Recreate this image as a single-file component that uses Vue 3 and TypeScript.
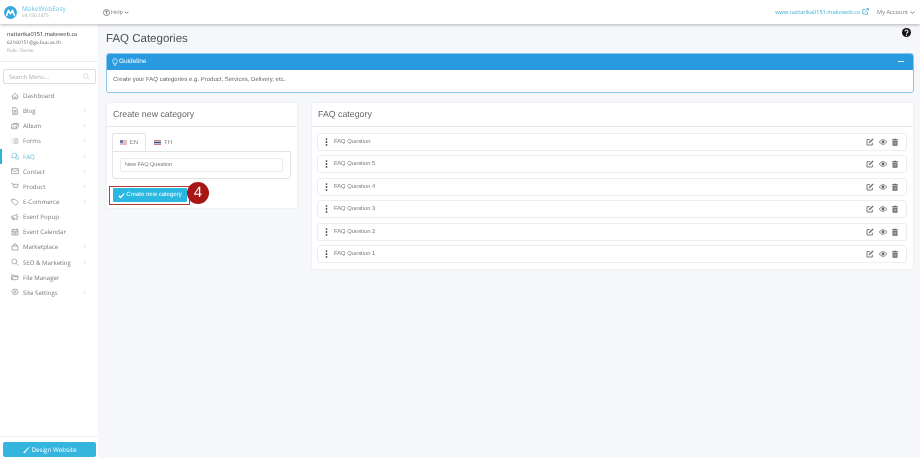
<script setup lang="ts">
const menu = [
  { label: 'Dashboard', icon: 'home', arrow: false },
  { label: 'Blog', icon: 'doc', arrow: true },
  { label: 'Album', icon: 'album', arrow: true },
  { label: 'Forms', icon: 'list', arrow: true },
  { label: 'FAQ', icon: 'faq', arrow: true, active: true },
  { label: 'Contact', icon: 'mail', arrow: true },
  { label: 'Product', icon: 'cart', arrow: true },
  { label: 'E-Commerce', icon: 'tag', arrow: true },
  { label: 'Event Popup', icon: 'horn', arrow: false },
  { label: 'Event Calendar', icon: 'cal', arrow: false },
  { label: 'Marketplace', icon: 'bag', arrow: true },
  { label: 'SEO & Marketing', icon: 'search', arrow: true },
  { label: 'File Manager', icon: 'folder', arrow: false },
  { label: 'Site Settings', icon: 'gear', arrow: true },
]
const icons: Record<string, string> = {
  home: 'M1 6.5 6 2l5 4.5M2.5 5.5V10.5h2.5V7.5h2v3h2.5V5.5',
  doc: 'M2.5 1h5l2 2v8h-7zM4 5h4M4 7h4M4 9h4',
  album: 'M1 3.5h8v6.5H1zM3 2h8v6M2 9l2.5-2.5L6 8l1-1 2 2',
  list: 'M1 3h1M1 6h1M1 9h1M4 3h7M4 6h7M4 9h7',
  faq: 'M1.5 5a3.5 3.5 0 1 1 2 3.2L1.5 9zM6.5 5.5a2.8 2.8 0 0 1 4 3.5l.5 2-2-.7a2.8 2.8 0 0 1-3-1.8',
  mail: 'M1 2.5h10v7.5H1zM1 3.5l5 3.5 5-3.5',
  cart: 'M.5 2h2l1.5 6h6l1-4.5H3M4.5 10.5h.5M9 10.5h.5',
  tag: 'M1 2h5l5 5-4 4-6-5.5zM3.3 4h.4',
  horn: 'M1 4.5h3L9 2v8L4 7.500H1zM2.500 7.500l.7 3h1.300l-.7-3M10.500 5v2',
  cal: 'M1.500 2.500h9v8h-9zM1.500 5h9M3.500 1v2M8.500 1v2M3.500 7h5M3.500 8.800h5',
  bag: 'M1.500 4.500h9v6h-9zM4 4.500V3a2 2 0 0 1 4 0v1.500',
  search: 'M5 1.500a3.700 3.700 0 1 0 0 7.400 3.700 3.700 0 0 0 0-7.400zM8 8l3.200 3.200',
  folder: 'M1 3h3.500l1 1.200H10v1.300M1 3v7h8.500l1.500-4.500H3L1 10',
  gear: 'M6 1.200 7.400 2.400 9.300 2.100 9.700 4 11 5.500 9.900 7l-.3 1.900-1.900.2L6 10.500 4.600 9.100l-1.900-.2L2.300 7 1 5.500 2.300 4l.4-1.900 1.900.3zM6 4.200a1.600 1.600 0 1 0 0 3.200 1.600 1.600 0 0 0 0-3.200z',
}
const questions = ['FAQ Question', 'FAQ Question 5', 'FAQ Question 4', 'FAQ Question 3', 'FAQ Question 2', 'FAQ Question 1']
</script>

<template>
  <div class="page">
    <header class="topbar">
      <div class="brand">
        <svg class="logo" viewBox="0 0 20 20" width="13" height="13">
          <circle cx="10" cy="10" r="10" fill="#35a9dc" />
          <path d="M4 14.500 6.800 6.500 10 12l3.200-5.500 2.800 8" fill="none" stroke="#fff" stroke-width="2.400" stroke-linecap="round" stroke-linejoin="round" />
        </svg>
        <div class="brand-text">
          <div class="brand-name">MakeWebEasy</div>
          <div class="brand-ver">v4.150.1875</div>
        </div>
      </div>
      <div class="help">
        <svg viewBox="0 0 12 12" width="7" height="7"><circle cx="6" cy="6" r="5.200" fill="none" stroke="#555" stroke-width="1.100" /><path d="M3.500 4h5M6 4v5" stroke="#555" stroke-width="1.100" fill="none" /></svg>
        <span>Help</span>
        <svg viewBox="0 0 8 8" width="5" height="5"><path d="M1 2.500 4 5.500 7 2.500" fill="none" stroke="#555" stroke-width="1.200" /></svg>
      </div>
      <div class="spacer"></div>
      <span class="site">www.nattarika0151.makeweb.co</span>
      <svg class="ext" viewBox="0 0 12 12" width="7" height="7"><path d="M9.500 7v3.500h-8V2.500H6M5 7.500 10.800 1.200M7.500 1h3.500v3.500" fill="none" stroke="#2aa5c9" stroke-width="1.200" /></svg>
      <span class="account">My Account</span>
      <svg class="acc-arrow" viewBox="0 0 8 8" width="5" height="5"><path d="M1 2.500 4 5.500 7 2.500" fill="none" stroke="#555" stroke-width="1.200" /></svg>
    </header>

    <div class="body">
      <aside class="sidebar">
        <div class="user">
          <div class="user-name">nattarika0151.makeweb.co</div>
          <div class="user-mail">62160151@go.buu.ac.th</div>
          <div class="user-role">Role: Owner</div>
        </div>
        <div class="search">
          <span>Search Menu...</span>
          <svg viewBox="0 0 12 12" width="7" height="7"><circle cx="5" cy="5" r="3.800" fill="none" stroke="#ccc" stroke-width="1.100" /><path d="M8 8l3 3" stroke="#ccc" stroke-width="1.100" /></svg>
        </div>
        <nav class="menu">
          <div v-for="m in menu" :key="m.label" class="item" :class="{ active: m.active }">
            <svg class="mi" viewBox="0 0 12 12" width="8" height="8"><path :d="icons[m.icon]" fill="none" stroke="currentColor" stroke-width="1" /></svg>
            <span class="ml">{{ m.label }}</span>
            <svg v-if="m.arrow" class="ma" viewBox="0 0 6 8" width="3" height="5"><path d="M1.500 1 4.500 4 1.500 7" fill="none" stroke="#bbb" stroke-width="1.100" /></svg>
          </div>
        </nav>
        <div class="side-foot">
          <button class="design">
            <svg viewBox="0 0 12 12" width="8" height="8"><path d="M11 1 5 6.500 6.500 8 11.500 1.500zM4.500 7 6 8.500C5.500 10.500 3 11 1 10.500 2.500 10 3 8 4.500 7z" fill="#fff" /></svg>
            <span>Design Website</span>
          </button>
        </div>
      </aside>

      <main class="main">
        <div class="title-row">
          <h1>FAQ Categories</h1>
          <svg class="q" viewBox="0 0 12 12" width="9" height="9"><circle cx="6" cy="6" r="6" fill="#111" /><path d="M4 4.500a2 2 0 1 1 3 1.800c-.7.4-1 .8-1 1.400" fill="none" stroke="#fff" stroke-width="1.400" /><circle cx="6" cy="9.600" r=".9" fill="#fff" /></svg>
        </div>

        <section class="guide">
          <div class="guide-head">
            <svg viewBox="0 0 12 12" width="8" height="8"><path d="M6 1a3.500 3.500 0 0 0-2 6.300V9h4V7.300A3.500 3.500 0 0 0 6 1zM4.500 10.800h3" fill="none" stroke="#fff" stroke-width="1.100" /></svg>
            <span class="gt">Guideline</span>
            <span class="minus"></span>
          </div>
          <div class="guide-body">Create your FAQ categories e.g. Product, Services, Delivery, etc.</div>
        </section>

        <div class="cols">
          <section class="card left">
            <div class="card-head">Create new category</div>
            <div class="card-body">
              <div class="tabs">
                <div class="tab on">
                  <svg viewBox="0 0 14 9" width="7" height="5"><rect width="14" height="9" fill="#e8e8ee" /><path d="M0 1h14M0 3.500h14M0 6h14M0 8.300h14" stroke="#d87a80" stroke-width="1" /><rect width="6" height="5" fill="#5a6ea8" /></svg>
                  <span>EN</span>
                </div>
                <div class="tab">
                  <svg viewBox="0 0 14 9" width="7" height="5"><rect width="14" height="9" fill="#e8e8ee" /><rect y="3" width="14" height="3" fill="#3f4a80" /><rect width="14" height="1.500" fill="#c8555f" /><rect y="7.500" width="14" height="1.500" fill="#c8555f" /></svg>
                  <span>TH</span>
                </div>
              </div>
              <div class="tab-pane">
                <div class="input">New FAQ Question</div>
              </div>
              <div class="action">
                <button class="create">
                  <svg viewBox="0 0 12 12" width="7" height="7"><path d="M1.500 6.500 4.500 9.500 10.500 2.800" fill="none" stroke="#fff" stroke-width="2.200" /></svg>
                  <span>Create new category</span>
                </button>
                <span class="mark"></span>
                <span class="badge">4</span>
              </div>
            </div>
          </section>

          <section class="card right">
            <div class="card-head">FAQ category</div>
            <div class="rows">
              <div v-for="q in questions" :key="q" class="row">
                <svg class="dots" viewBox="0 0 3 9" width="3" height="8"><circle cx="1.500" cy="1.200" r="1" fill="#444" /><circle cx="1.500" cy="4.500" r="1" fill="#444" /><circle cx="1.500" cy="7.800" r="1" fill="#444" /></svg>
                <span class="rl">{{ q }}</span>
                <svg class="ai" viewBox="0 0 12 12" width="8" height="8"><path d="M9.500 7v3.500h-8v-8H6" fill="none" stroke="#666" stroke-width="1.300" /><path d="M4.500 6 10 .8l1.300 1.300L5.800 7.500 4 8z" fill="#666" /></svg>
                <svg class="ai" viewBox="0 0 12 12" width="8" height="8"><path d="M.5 6C2 3.500 4 2.500 6 2.500S10 3.500 11.500 6C10 8.500 8 9.500 6 9.500S2 8.500.5 6z" fill="none" stroke="#666" stroke-width="1.100" /><circle cx="6" cy="6" r="2.200" fill="#666" /></svg>
                <svg class="ai" viewBox="0 0 12 12" width="8" height="8"><path d="M4.500 1h3v1h3v1.200h-9V2h3zM2.300 4h7.400v7.500H2.300z" fill="#666" /><path d="M4.500 5.500v4.500M6 5.500v4.500M7.500 5.500v4.500" stroke="#fff" stroke-width=".6" /></svg>
              </div>
            </div>
          </section>
        </div>
      </main>
    </div>
  </div>
</template>

<style>
html, body { margin: 0; background: #f5f7fa; }
</style>

<style scoped>
.page { width: 920px; height: 458px; overflow: hidden; display: flex; flex-direction: column; font-family: "Open Sans", "Liberation Sans", sans-serif; color: #555; background: #f5f7fa; text-rendering: geometricPrecision; filter: blur(.25px); }
.topbar { height: 24px; flex: none; background: #fff; display: flex; align-items: center; box-shadow: 0 1px 3px rgba(0,0,0,.28); position: relative; z-index: 2; }
.brand { display: flex; align-items: center; width: 103px; padding-left: 4px; box-sizing: border-box; gap: 5px; }
.brand-name { font-size: 6.500px; color: #6cc4e4; line-height: 8px; }
.brand-ver { font-size: 4.800px; color: #aaa; line-height: 7px; }
.help { display: flex; align-items: center; gap: 1px; font-size: 5.500px; color: #777; }
.spacer { flex: 1; }
.site { font-size: 5.600px; color: #3aaccd; }
.ext { margin: 0 0 2px 2px; }
.account { font-size: 5.700px; color: #777; margin-left: 8px; }
.acc-arrow { margin: 0 5px 0 2px; }
.body { flex: 1; display: flex; min-height: 0; }
.sidebar { width: 98px; flex: none; background: #fff; display: flex; flex-direction: column; }
.user { height: 38px; box-sizing: border-box; padding: 6px 0 0 7px; border-bottom: 1px solid #eee; }
.user-name { font-size: 5.600px; color: #333; line-height: 9px; }
.user-mail { font-size: 4.800px; color: #666; line-height: 9px; }
.user-role { font-size: 4.800px; color: #aaa; line-height: 7px; }
.search { margin: 7px 2px 0 3px; height: 15px; box-sizing: border-box; border: 1px solid #ddd; border-radius: 2px; display: flex; align-items: center; justify-content: space-between; padding: 0 5px; font-size: 5.800px; color: #aaa; }
.menu { margin-top: 4px; display: flex; flex-direction: column; }
.item { height: 15.150px; display: flex; align-items: center; padding: 0 12px 0 11px; font-size: 6.100px; color: #777; position: relative; }
.mi { color: #888; flex: none; }
.ml { margin-left: 4px; white-space: nowrap; }
.ma { margin-left: auto; }
.item.active, .item.active .mi { color: #63bcda; }
.item.active::before { content: ""; position: absolute; left: 0; top: 0; width: 2px; height: 15px; background: #2cb5dc; }
.side-foot { margin-top: auto; border-top: 1px solid #f0f0f0; padding: 5px 0 1px 3px; }
.design { width: 93px; height: 15px; border: 0; border-radius: 2px; background: #33b5de; color: #fff; font: 400 6.300px "Open Sans", sans-serif; display: flex; align-items: center; justify-content: center; gap: 1px; padding: 0; text-rendering: geometricPrecision; }
.main { flex: 1; min-width: 0; padding: 0 6px 0 8px; font-family: "Liberation Sans", Arial, sans-serif; }
.title-row { height: 29px; display: flex; align-items: center; justify-content: space-between; }
h1 { margin: 0; font-size: 11.500px; font-weight: 400; color: #4a4f55; }
.q { align-self: flex-start; margin: 4px 3px 0 0; }
.guide { height: 40px; box-sizing: border-box; border: 1px solid #8cc6e8; border-radius: 3px; background: #fff; overflow: hidden; }
.guide-head { height: 17px; margin: -1px -1px 0; background: #2a9ae0; color: #fff; display: flex; align-items: center; padding: 0 5px; font-size: 6.500px; }
.minus { margin-left: auto; width: 6px; height: 1.500px; background: #fff; margin-right: 5px; }
.guide-body { font-size: 6px; color: #666; padding: 6px 6px; line-height: 9px; }
.cols { display: flex; gap: 13px; margin-top: 9px; align-items: flex-start; }
.card { background: #fff; border: 1px solid #eef0f2; border-radius: 3px; box-sizing: border-box; }
.left { width: 192px; height: 107px; }
.right { flex: 1; height: 168px; }
.card-head { height: 24px; box-sizing: border-box; border-bottom: 1px solid #e6e8ea; padding: 0 6px; font-size: 8.800px; line-height: 23px; color: #666; }
.card-body { padding: 6px 6px 0 5px; }
.tabs { display: flex; height: 18px; }
.tab { width: 34px; box-sizing: border-box; display: flex; align-items: center; justify-content: center; gap: 3px; font-size: 6px; color: #777; border: 1px solid transparent; border-bottom: 0; }
.tab.on { border-color: #e3e3e3; border-radius: 2px 2px 0 0; background: #fff; }
.tab-pane { height: 28px; box-sizing: border-box; border: 1px solid #e3e3e3; border-radius: 0 0 3px 3px; padding: 6px 7px; }
.input { height: 14px; box-sizing: border-box; border: 1px solid #eaeaea; border-radius: 2px; font-size: 5.500px; line-height: 12px; padding: 0 4px; color: #777; }
.action { position: relative; margin-top: 9px; margin-left: 1px; }
.create { height: 14px; width: 74px; border: 0; background: #2bb8e0; color: #fff; font: 6px "Liberation Sans", Arial, sans-serif; display: flex; align-items: center; justify-content: center; padding: 0; gap: 1px; border-radius: 1px; text-rendering: geometricPrecision; }
.mark { position: absolute; left: -4px; top: -2px; width: 81px; height: 19px; box-sizing: border-box; border: 1px solid #b23a3a; }
.badge { position: absolute; left: 74px; top: -6px; width: 22px; height: 22px; border-radius: 50%; background: #a81616; color: #fff; font-size: 15px; line-height: 22px; text-align: center; }
.rows { padding: 6px 6px 0 5px; display: flex; flex-direction: column; gap: 4.400px; }
.row { height: 18px; box-sizing: border-box; border: 1px solid #eceef0; border-radius: 3px; display: flex; align-items: center; padding: 0 7px 0 7px; font-size: 5.800px; color: #777; }
.rl { margin-left: 6px; margin-right: auto; }
.ai { margin-left: 4.500px; }
</style>
